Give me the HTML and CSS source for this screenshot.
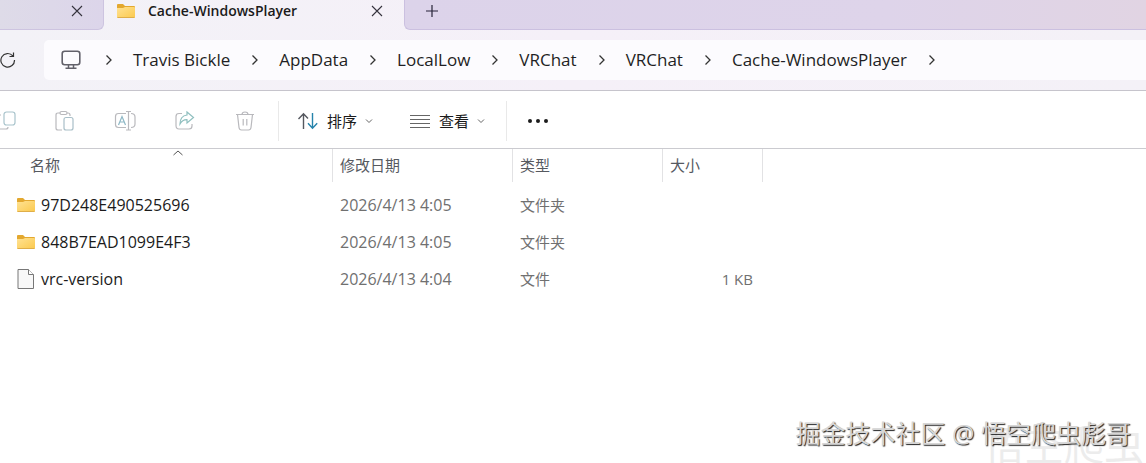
FILE: index.html
```html
<!DOCTYPE html>
<html lang="zh-CN">
<head>
<meta charset="utf-8">
<title>Cache-WindowsPlayer</title>
<link rel="stylesheet" href="styles.css">
</head>
<body>
<svg class="defs" aria-hidden="true">
  <defs>
    <linearGradient id="gold" x1="0" y1="0" x2="1" y2="1"><stop offset="0" stop-color="#ffe293"/><stop offset="1" stop-color="#fbc94d"/></linearGradient>
    <symbol id="folder" viewBox="0 0 20 16"><path d="M1 2q0-1 1-1h5l2 2h9q1 0 1 1v4H1z" fill="#e3a82f"/><path d="M1 5h6l2-1h9q1 0 1 1v9q0 1-1 1H2q-1 0-1-1z" fill="url(#gold)"/><path d="M1.500 14.500h17" stroke="#dfae49"/></symbol>
    <symbol id="close" viewBox="0 0 12 12"><path d="M1 1l10 10M11 1L1 11" fill="none" stroke="currentColor" stroke-width="1.100"/></symbol>
    <symbol id="right" viewBox="0 0 8 12"><path d="M1.500 1.500L6 6l-4.500 4.500" fill="none" stroke="currentColor" stroke-width="1.300"/></symbol>
    <symbol id="down" viewBox="0 0 8 6"><path d="M1 1.500l3 3 3-3" fill="none" stroke="currentColor"/></symbol>
  </defs>
</svg>
<header class="chrome">
  <div class="tabs">
    <div class="tab tab-back"><button class="plain" aria-label="关闭标签页"><svg class="i12"><use href="#close"/></svg></button></div>
    <div class="tab tab-active">
      <svg class="folder"><use href="#folder"/></svg>
      <span class="tab-title">Cache-WindowsPlayer</span>
      <button class="plain" aria-label="关闭标签页"><svg class="i12"><use href="#close"/></svg></button>
    </div>
    <div class="tab-rest"><button class="plain" aria-label="新建标签页"><svg class="i12" viewBox="0 0 12 12"><path d="M6 0v12M0 6h12" fill="none" stroke="#262338" stroke-width="1.200"/></svg></button></div>
  </div>
  <div class="nav">
    <button class="plain refresh" aria-label="刷新"><svg width="16" height="18" viewBox="0 0 16 18"><path d="M14.500 9A6.800 6.800 0 1 1 12.800 4.800M13.500 1.500v4H9.500" fill="none" stroke="#333" stroke-width="1.200"/></svg></button>
    <nav class="path" aria-label="路径">
      <svg class="pc" viewBox="0 0 20 20"><rect x="1.200" y="1.200" width="17.600" height="13.600" rx="2.500" fill="none" stroke="#62616a" stroke-width="1.600"/><path d="M7.500 15v3M12.500 15v3M4.500 18.200h11" fill="none" stroke="#62616a" stroke-width="1.500"/></svg>
      <svg class="sep"><use href="#right"/></svg><a href="#">Travis Bickle</a>
      <svg class="sep"><use href="#right"/></svg><a href="#">AppData</a>
      <svg class="sep"><use href="#right"/></svg><a href="#">LocalLow</a>
      <svg class="sep"><use href="#right"/></svg><a href="#">VRChat</a>
      <svg class="sep"><use href="#right"/></svg><a href="#">VRChat</a>
      <svg class="sep"><use href="#right"/></svg><a href="#">Cache-WindowsPlayer</a>
      <svg class="sep"><use href="#right"/></svg>
    </nav>
  </div>
</header>
<div class="toolbar">
  <div class="group edit">
    <button class="plain" aria-label="复制"><svg class="tool" viewBox="0 0 22 22"><rect x="10" y="2" width="11" height="13" rx="2.500" stroke="#a9c4cc"/><path d="M7 5H4q-2 0-2 2v9q0 3 3 3h7q2 0 2-2" /></svg></button>
    <button class="plain" aria-label="粘贴"><svg class="tool" viewBox="0 0 22 22"><path d="M6 3H4Q2 3 2 5v13q0 2 2 2h4M13 3h1q2 0 2 2v1"/><rect x="6" y="1.500" width="7" height="3" rx="1.500"/><rect x="10" y="7.500" width="9" height="12.500" rx="2" stroke="#a9bfc8"/></svg></button>
    <button class="plain" aria-label="重命名"><svg class="tool" viewBox="0 0 22 22"><path d="M12 3.500H4.500Q1.500 3.500 1.500 6.500v8q0 3 3 3H12M17 3.500q4 0 4 3.500v7q0 3.500-4 3.500M12 1.500h5M12 20h5M14.500 1.500V20"/><path d="M4.500 15L8 6.500l3.500 8.500M6 12h4" stroke="#8eb8c6"/></svg></button>
    <button class="plain" aria-label="共享"><svg class="tool" viewBox="0 0 22 22"><path d="M8 3.500H5Q2 3.500 2 6.500v9Q2 19 5 19h10q3 0 3-3v-2"/><path d="M13 2l6.500 5.500L13 13v-3.300Q8.500 9.500 6 14q0-8 7-9z" stroke="#8fbfbf"/></svg></button>
    <button class="plain" aria-label="删除"><svg class="tool" viewBox="0 0 22 22"><path d="M2 4.500h18M8 4.500Q8 2 11 2t3 2.500M3.500 4.500l1.500 13q.3 2.500 2.500 2.500h7q2.200 0 2.500-2.500l1.500-13M9.200 9v6.500M12.800 9v6.500"/></svg></button>
  </div>
  <div class="group view">
    <button class="plain menu"><svg width="22" height="18" viewBox="0 0 22 18" fill="none" stroke-width="1.400"><path d="M6.500 17V2M1.500 7l5-5.200L11 6.500" stroke="#55585f"/><path d="M15.500 1v15M11 11.200l4.500 5 4.700-5" stroke="#2683ab"/></svg>排序<svg class="caret"><use href="#down"/></svg></button>
    <button class="plain menu"><svg width="22" height="16" viewBox="0 0 22 16"><path d="M1 2.500h20M1 6.500h20M1 10.500h20M1 14.500h20" stroke="#666" stroke-width="1"/></svg>查看<svg class="caret"><use href="#down"/></svg></button>
  </div>
  <div class="group more"><button class="plain" aria-label="更多"><svg width="22" height="6" viewBox="0 0 22 6" fill="#1c1c1c"><circle cx="3" cy="3" r="2"/><circle cx="11" cy="3" r="2"/><circle cx="19" cy="3" r="2"/></svg></button></div>
</div>
<main class="content">
  <table class="files">
    <colgroup><col class="c-name"><col class="c-date"><col class="c-type"><col class="c-size"><col></colgroup>
    <thead><tr><th class="name">名称<svg class="sort" viewBox="0 0 12 6"><path d="M1.500 5L6 1l4.500 4" fill="none" stroke="#555"/></svg></th><th>修改日期</th><th>类型</th><th>大小</th><td></td></tr></thead>
    <tbody>
      <tr><td class="name"><div class="entry"><svg class="folder"><use href="#folder"/></svg>97D248E490525696</div></td><td class="date">2026/4/13 4:05</td><td>文件夹</td><td></td><td></td></tr>
      <tr><td class="name"><div class="entry"><svg class="folder"><use href="#folder"/></svg>848B7EAD1099E4F3</div></td><td class="date">2026/4/13 4:05</td><td>文件夹</td><td></td><td></td></tr>
      <tr><td class="name"><div class="entry"><svg class="file" viewBox="0 0 20 22"><path d="M2 1.500h10.500l5 5v14H2z" fill="#f8f8f8" stroke="#777"/><path d="M12.500 1.500v5h5" fill="#fff" stroke="#777"/></svg>vrc-version</div></td><td class="date">2026/4/13 4:04</td><td>文件</td><td class="size">1 KB</td><td></td></tr>
    </tbody>
  </table>
  <div class="mark mark-faint">悟空爬虫</div>
  <div class="mark mark-main">掘金技术社区 @ 悟空爬虫彪哥</div>
</main>
</body>
</html>
```
FILE: styles.css
```css
* { box-sizing: border-box; }
body {
  margin: 0;
  min-height: 100vh;
  display: flex;
  flex-direction: column;
  background: #fff;
  color: #1b1b1b;
  font: 15px/20px "Open Sans", "Noto Sans CJK SC", sans-serif;
}
svg { display: block; flex: none; }
.defs { position: absolute; width: 0; height: 0; }
.plain {
  display: flex;
  align-items: center;
  padding: 0;
  border: 0;
  background: none;
  color: inherit;
  font: inherit;
}
.i12 { width: 12px; height: 12px; color: #35333d; }
.folder { width: 20px; height: 16px; }

.chrome {
  background: linear-gradient(90deg, #f3f2f7, #f5f0f8 50%, #f4f1f7);
  border-bottom: 1px solid #c6c4cc;
}
.tabs { display: flex; height: 30px; }
.tab, .tab-rest { display: flex; align-items: center; padding-bottom: 8px; }
.tab-back {
  width: 104px;
  justify-content: flex-end;
  padding-right: 20px;
  background: linear-gradient(90deg, #dedbe8, #dcd5ea);
  border: solid #cdc4e0;
  border-width: 0 1px 1px 0;
  border-radius: 0 0 6px 0;
}
.tab-active { width: 300px; padding-left: 12px; padding-right: 21px; gap: 12px; }
.tab-title { flex: 1; font-size: 14px; font-weight: 600; }
.tab-rest {
  flex: 1;
  padding-left: 21px;
  background: linear-gradient(90deg, #dcd3ea, #ded4ea 65%, #e1d4e3);
  border: solid #cbc0e0;
  border-width: 0 0 1px 1px;
  border-radius: 0 0 0 6px;
}
.nav { display: flex; align-items: center; height: 60px; }
.refresh { width: 44px; }
.path {
  flex: 1;
  display: flex;
  align-items: center;
  height: 40px;
  padding-left: 17px;
  background: #fcfbfe;
  border-radius: 5px 0 0 5px;
  font-size: 17px;
}
.path a { color: #1f1f24; text-decoration: none; white-space: nowrap; }
.pc { width: 20px; height: 20px; margin-right: 3px; }
.sep { width: 8px; height: 12px; margin: 0 20px 0 21px; color: #333; }

.toolbar {
  display: flex;
  align-items: center;
  height: 58px;
  padding-top: 2px;
  border-bottom: 1px solid #cbcbd0;
}
.group { display: flex; align-items: center; height: 40px; }
.edit { width: 279px; gap: 38px; border-right: 1px solid #e9e9e9; }
.edit button:first-child { width: 16px; justify-content: flex-end; overflow: hidden; }
.tool { width: 22px; height: 22px; fill: none; stroke: #b9b9bd; stroke-width: 1.2; }
.view { width: 228px; gap: 36px; padding-left: 18px; border-right: 1px solid #e9e9e9; }
.menu { gap: 8px; }
.caret { width: 8px; height: 6px; color: #666; }
.more { padding-left: 20px; }

.content { flex: 1; position: relative; overflow: hidden; }
.files { width: 100%; table-layout: fixed; border-collapse: separate; border-spacing: 0; }
.c-name { width: 333px; }
.c-date { width: 180px; }
.c-type { width: 150px; }
.c-size { width: 100px; }
.files th {
  position: relative;
  height: 33px;
  padding: 0 7px 2px;
  border-right: 1px solid #e2e2e4;
  text-align: left;
  font-weight: 400;
  color: #56595f;
}
.files th.name { padding-left: 30px; }
.sort { position: absolute; top: 1px; left: 172px; width: 12px; height: 6px; }
.files tbody::before { content: ""; display: block; height: 4px; }
.files tbody td { height: 37px; padding: 0 7px; color: #707070; }
.files tbody td.name { padding-left: 16px; color: #1b1b1b; font-size: 16px; }
.files tbody td.date { font-size: 16px; }
.files tbody td.size { padding-right: 10px; text-align: right; }
.entry { display: flex; align-items: center; gap: 5px; }
.file { width: 20px; height: 22px; }

.mark { position: absolute; white-space: nowrap; pointer-events: none; }
.mark-faint { right: 2px; bottom: -10px; font-size: 40px; line-height: 56px; color: #ececec; }
.mark-main {
  right: 15px;
  bottom: 12px;
  font-size: 25px;
  line-height: 36px;
  color: #d6d6d6;
  text-shadow: 1px 1px 1px #222;
}
```
